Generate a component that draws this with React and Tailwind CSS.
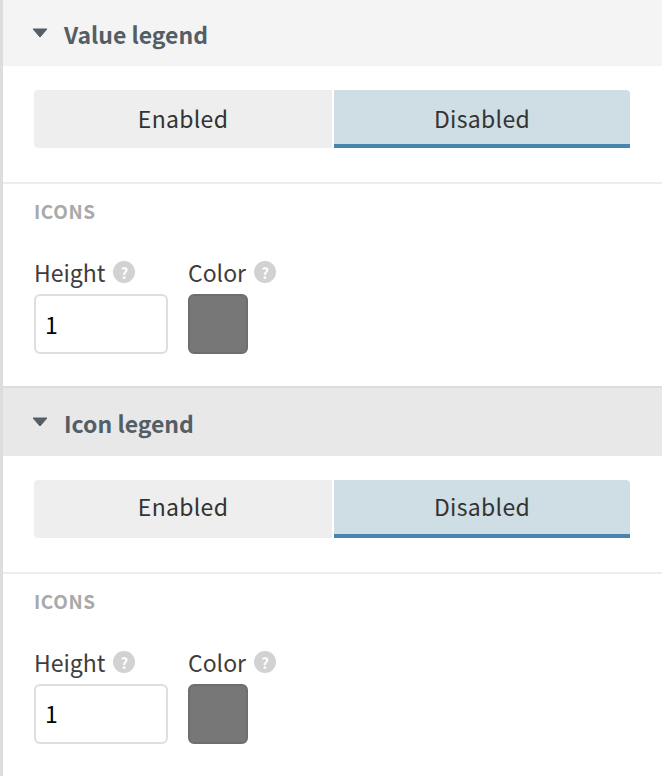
const font = { fontFamily: '"Noto Sans CJK SC", "Noto Sans", sans-serif' };

const Help = () => (
  <span className="ml-[8px] flex h-[22px] w-[22px] items-center justify-center rounded-full bg-[#d2d2d2] pt-[1px] text-[15px] leading-none font-bold text-white">
    ?
  </span>
);

// the second section's text sits 2px higher in the tabs and the input
const Section = ({ title, headerClass, tabText, inputText }) => (
  <div>
    <div className={`flex items-center pl-[29px] ${headerClass}`}>
      <svg width="16" height="10" viewBox="0 0 16 10" className="mr-[16px]">
        <path d="M1 1H15L8 9Z" fill="#545e66" stroke="#545e66" strokeWidth="1" strokeLinejoin="round" />
      </svg>
      <span className="pt-[3px] text-[23px] leading-none font-bold text-[#545e66]">{title}</span>
    </div>
    <div className="flex h-[118px] border-b-2 border-[#ededed] px-[31px] pt-[24px]">
      <div className={`flex h-[58px] w-[298px] items-center justify-center rounded-l-[4px] border-b-4 border-transparent bg-[#eeeeee] text-[23px] tracking-[0.3px] text-[#333333] ${tabText}`}>
        Enabled
      </div>
      <div className={`ml-[2px] flex h-[58px] w-[296px] items-center justify-center rounded-tr-[4px] border-b-4 border-[#4585ae] bg-[#cfdde4] text-[23px] tracking-[0.3px] text-[#333333] ${tabText}`}>
        Disabled
      </div>
    </div>
    <div className="px-[31px] pt-[15px]">
      <div className="text-[19px] leading-[24px] font-bold tracking-[0.6px] text-[#a9a9a9]">ICONS</div>
      <div className="mt-[33px] flex gap-[20px]">
        <div>
          <div className="flex h-[32px] items-center text-[23px] text-[#3d3d3d]">
            Height
            <Help />
          </div>
          <div className={`mt-[6px] flex h-[60px] w-[134px] items-center rounded-[6px] border-2 border-[#dedede] bg-white pl-[9px] text-[23px] text-black ${inputText}`}>
            1
          </div>
        </div>
        <div>
          <div className="flex h-[32px] items-center text-[23px] text-[#3d3d3d]">
            Color
            <Help />
          </div>
          <div className="mt-[6px] h-[60px] w-[60px] rounded-[6px] border-2 border-[#6e6e6e] bg-[#777777]" />
        </div>
      </div>
    </div>
  </div>
);

export default function App() {
  return (
    <div className="h-[776px] w-[662px] overflow-hidden border-l-[3px] border-[#dddddd] bg-white" style={font}>
      <Section title="Value legend" headerClass="h-[66px] bg-[#f4f4f4]" tabText="pt-[2px]" inputText="pt-[1px]" />
      <div className="mt-[32px] border-t-2 border-[#dddddd]">
        <Section title="Icon legend" headerClass="h-[68px] bg-[#e8e8e8]" tabText="pb-[2px]" inputText="pb-[1px]" />
      </div>
    </div>
  );
}
